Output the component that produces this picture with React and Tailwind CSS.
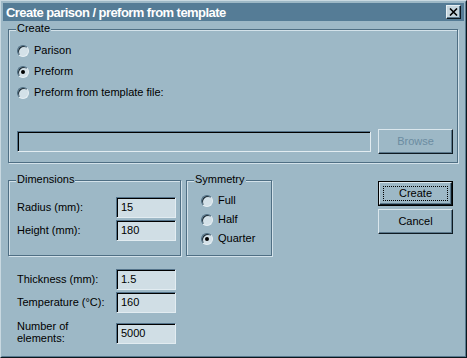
import React from 'react';

const font = "font-['Liberation_Sans',Arial,sans-serif]";

const Group = ({label, className, children}) => (
    <div
        className={`relative border border-[#4f6f84] shadow-[1px_1px_0_#d3e2ea,inset_1px_1px_0_#d3e2ea] ${className}`}>
      <span className="absolute top-[-8px] left-[7px] bg-[#9db8c6] px-[1px] leading-[13px]">{label}</span>
      {children}
    </div>
);

const Radio = ({label, checked}) => (
    <div className="flex items-center gap-[5px]">
      <span
          className="w-[12px] h-[12px] rounded-full border border-t-[#4c6b80] border-l-[#4c6b80] border-r-[#e6eff3] border-b-[#e6eff3] bg-[#d3e1e8] shadow-[inset_1px_1px_0_#1c2c36] flex items-center justify-center">
        {checked && <span className="w-[4px] h-[4px] rounded-full bg-black"/>}
      </span>
      <span>{label}</span>
    </div>
);

const Field = ({value, className = 'w-[60px] bg-[#d0dee5]'}) => (
    <div
        className={`h-[21px] flex items-center pl-[4px] border border-t-[#54738a] border-l-[#54738a] border-r-[#e2ecf1] border-b-[#e2ecf1] shadow-[inset_1px_1px_0_#000] ${className}`}>
      {value}
    </div>
);

const Button = ({children, isDefault, disabled}) => (
    <div
        className={`w-[75px] h-[25px] ${isDefault ? 'border border-black' : ''}`}>
      <div
          className="relative h-full flex items-center justify-center border border-t-[#dbe7ed] border-l-[#dbe7ed] border-r-[#0e1a22] border-b-[#0e1a22] shadow-[inset_-1px_-1px_0_#5a788c]">
        {isDefault && (
            <span className="absolute inset-[3px] border border-dotted border-black"/>
        )}
        <span className={disabled ? 'text-[#6b8ca1]' : ''}>{children}</span>
      </div>
    </div>
);

const Row = ({label, value}) => (
    <div className="flex items-center h-[21px]">
      <span className="w-[99px]">{label}</span>
      <Field value={value}/>
    </div>
);

export default function App() {
  return (
      <div
          className={`w-[467px] h-[358px] border border-t-[#c9d9e1] border-l-[#c9d9e1] border-r-[#0c161d] border-b-[#0c161d] bg-[#9db8c6] text-[11px] text-black ${font}`}>
        <div
            className="h-full border border-t-[#9db8c6] border-l-[#9db8c6] border-r-[#587a8f] border-b-[#587a8f] p-[1px] flex flex-col">
          {/* title bar */}
          <div className="h-[18px] bg-[#557c96] flex items-center justify-between pl-[3px] pr-[3px]">
            <span className="text-white font-bold text-[13px] tracking-[-0.55px] leading-none">
              Create parison / preform from template
            </span>
            <div
                className="w-[15px] h-[14px] bg-[#c6d6de] border border-t-[#e8f0f4] border-l-[#e8f0f4] border-r-[#0e1a22] border-b-[#0e1a22] shadow-[inset_-1px_-1px_0_#5a788c] flex items-center justify-center">
              <svg width="9" height="8" viewBox="0 0 9 8">
                <path d="M1 0.5 L8 7.5 M8 0.5 L1 7.5" stroke="#000" strokeWidth="1.6"/>
              </svg>
            </div>
          </div>

          <div className="pl-[5px] pr-[6px] flex flex-col">
            {/* Create */}
            <Group label="Create" className="mt-[8px] h-[134px] pt-[10px] pl-[8px] pr-[4px]">
              <div className="h-[21px] flex items-center"><Radio label="Parison"/></div>
              <div className="h-[21px] flex items-center"><Radio label="Preform" checked/></div>
              <div className="h-[21px] flex items-center"><Radio label="Preform from template file:"/></div>
              <div className="mt-[26px] h-[24px] flex items-center justify-between">
                <Field value="" className="w-[354px] bg-[#9db8c6]"/>
                <Button disabled>Browse</Button>
              </div>
            </Group>

            {/* Dimensions / Symmetry / buttons */}
            <div className="mt-[17px] flex items-start">
              <Group label="Dimensions" className="w-[173px] h-[76px] pt-[16px] pl-[8px]">
                <div className="flex flex-col gap-[2px]">
                  <Row label="Radius (mm):" value="15"/>
                  <Row label="Height (mm):" value="180"/>
                </div>
              </Group>
              <Group label="Symmetry" className="ml-[5px] w-[86px] h-[76px] pt-[10px] pl-[14px]">
                <div className="h-[19px] flex items-center"><Radio label="Full"/></div>
                <div className="h-[19px] flex items-center"><Radio label="Half"/></div>
                <div className="h-[19px] flex items-center"><Radio label="Quarter" checked/></div>
              </Group>
              <div className="ml-auto mr-[5px] mt-[1px] flex flex-col gap-[3px]">
                <Button isDefault>Create</Button>
                <Button>Cancel</Button>
              </div>
            </div>

            {/* lower fields */}
            <div className="mt-[13px] pl-[9px] flex flex-col gap-[2px]">
              <Row label="Thickness (mm):" value="1.5"/>
              <Row label="Temperature (°C):" value="160"/>
            </div>
            <div className="mt-[7px] pl-[9px] flex items-start">
              <span className="w-[99px] leading-[12px]">Number of<br/>elements:</span>
              <div className="mt-[3px]"><Field value="5000"/></div>
            </div>
          </div>
        </div>
      </div>
  );
}
